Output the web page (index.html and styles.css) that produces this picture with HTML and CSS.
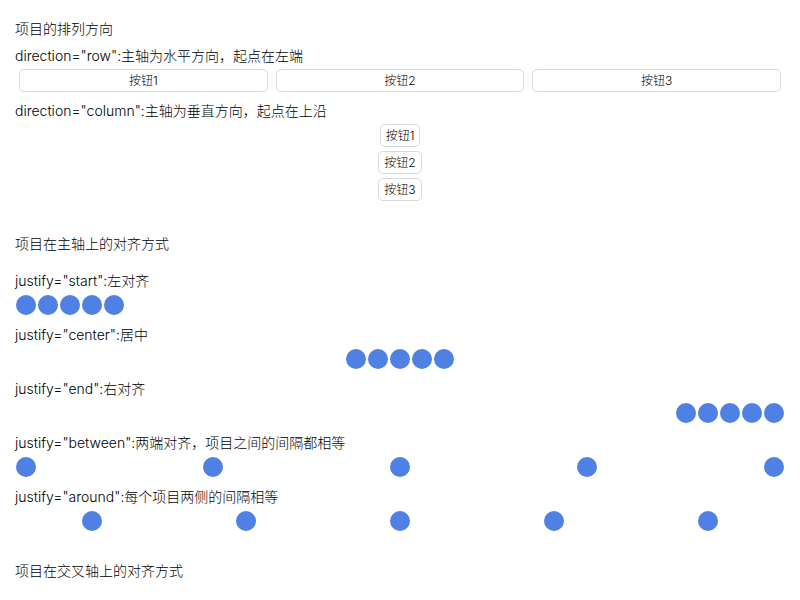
FILE: index.html
```html
<!DOCTYPE html>
<html lang="zh-CN">
<head>
<meta charset="utf-8">
<title>Flex</title>
<link rel="stylesheet" href="styles.css">
</head>
<body>
<main class="page">
  <section class="section">
    <h2 class="title">项目的排列方向</h2>
    <p class="label">direction="row":主轴为水平方向，起点在左端</p>
    <div class="buttons row">
      <button class="btn" type="button">按钮1</button>
      <button class="btn" type="button">按钮2</button>
      <button class="btn" type="button">按钮3</button>
    </div>
    <p class="label">direction="column":主轴为垂直方向，起点在上沿</p>
    <div class="buttons column">
      <button class="btn" type="button">按钮1</button>
      <button class="btn" type="button">按钮2</button>
      <button class="btn" type="button">按钮3</button>
    </div>
  </section>
  <section class="section justify">
    <h2 class="title">项目在主轴上的对齐方式</h2>
    <p class="label">justify="start":左对齐</p>
    <div class="dots start"><i class="dot"></i><i class="dot"></i><i class="dot"></i><i class="dot"></i><i class="dot"></i></div>
    <p class="label">justify="center":居中</p>
    <div class="dots center"><i class="dot"></i><i class="dot"></i><i class="dot"></i><i class="dot"></i><i class="dot"></i></div>
    <p class="label">justify="end":右对齐</p>
    <div class="dots end"><i class="dot"></i><i class="dot"></i><i class="dot"></i><i class="dot"></i><i class="dot"></i></div>
    <p class="label">justify="between":两端对齐，项目之间的间隔都相等</p>
    <div class="dots between"><i class="dot"></i><i class="dot"></i><i class="dot"></i><i class="dot"></i><i class="dot"></i></div>
    <p class="label">justify="around":每个项目两侧的间隔相等</p>
    <div class="dots around"><i class="dot"></i><i class="dot"></i><i class="dot"></i><i class="dot"></i><i class="dot"></i></div>
  </section>
  <section class="section">
    <h2 class="title">项目在交叉轴上的对齐方式</h2>
  </section>
</main>
</body>
</html>
```
FILE: styles.css
```css
* {
  box-sizing: border-box;
}

body {
  margin: 0;
  background: #fff;
  color: #000;
  font: 300 14px/22px Inter, "Noto Sans CJK SC", sans-serif;
}

.page {
  padding: 18px 15px 0;
}

.section {
  margin-bottom: 30px;
}

.title,
.label {
  margin: 0;
  font-size: 14px;
  font-weight: 300;
}

.label {
  margin-top: 5px;
}

.justify {
  margin-bottom: 28px;
}

.justify .title {
  margin-bottom: 15px;
}

.justify .label {
  margin-top: 8px;
}

.buttons {
  display: flex;
}

.row {
  margin-bottom: 6px;
}

.row .btn {
  flex: 1;
  margin: 2px 4px;
}

.column {
  flex-direction: column;
  align-items: center;
}

.column .btn {
  margin: 2px 0;
}

.btn {
  height: 23px;
  padding: 0 5px;
  border: 1px solid #d9d9d9;
  border-radius: 5px;
  background: #fff;
  color: #000;
  font: 300 12px/21px Inter, "Noto Sans CJK SC", sans-serif;
}

.dots {
  display: flex;
  padding-top: 2px;
}

.dot {
  width: 20px;
  height: 20px;
  margin: 1px;
  border-radius: 50%;
  background: #4f80e3;
}

.center {
  justify-content: center;
}

.end {
  justify-content: flex-end;
}

.between {
  justify-content: space-between;
}

.around {
  justify-content: space-around;
}
```
